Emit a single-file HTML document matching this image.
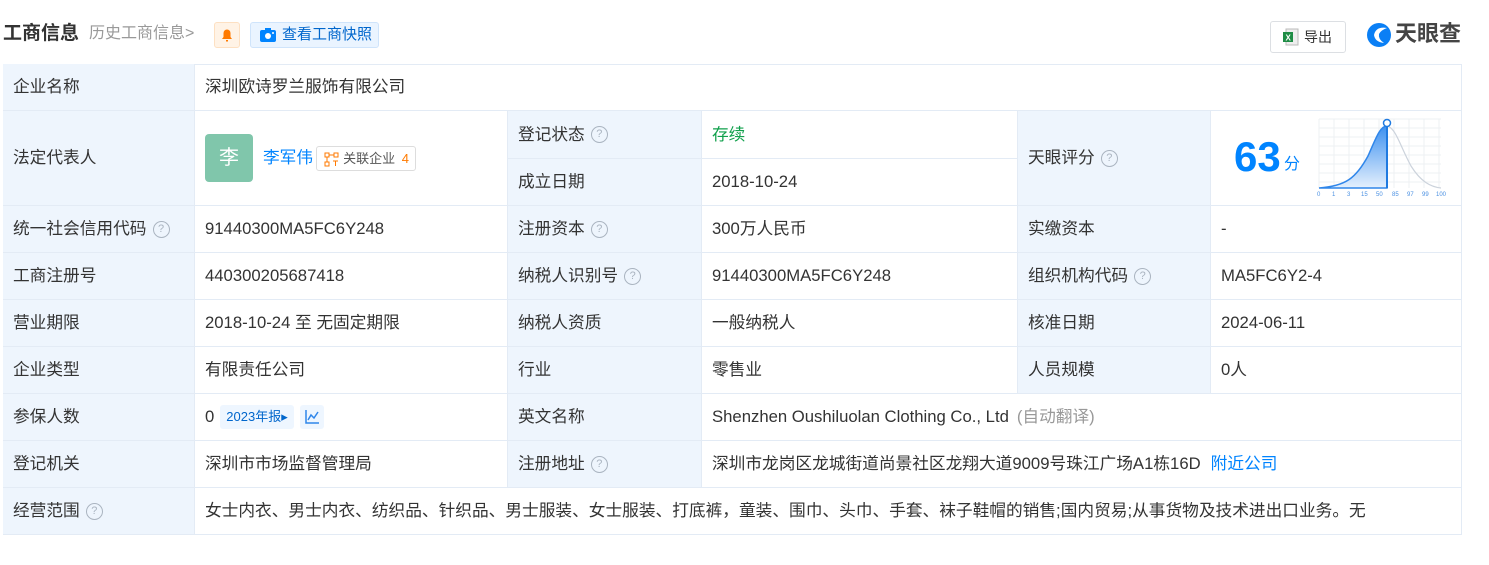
<!DOCTYPE html>
<html><head><meta charset="utf-8"><style>
*{margin:0;padding:0;box-sizing:border-box}
body{width:1489px;height:565px;background:#fff;font-family:"Liberation Sans","Noto Sans CJK SC",sans-serif;color:#333;position:relative;overflow:hidden;font-size:16px}
.a{position:absolute}
.c{position:absolute;border-right:1px solid #e3ebf5;border-bottom:1px solid #e3ebf5;display:flex;align-items:center;padding-left:10px;white-space:nowrap;font-size:16.7px;line-height:22px}
.c>span{line-height:22px}
.l{background:#eef5fd}
.q{display:inline-block;width:17px;height:17px;border:1px solid #aab4c0;border-radius:50%;font-size:11px;color:#aab4c0;text-align:center;line-height:15px !important;margin-left:6px}
</style></head><body>
<div class="a" style="left:3px;top:22px;font-size:19px;line-height:24px;font-weight:bold;color:#333">工商信息</div>
<div class="a" style="left:89px;top:24px;font-size:16px;line-height:20px;color:#999">历史工商信息&gt;</div>
<div class="a" style="left:214px;top:22px;width:26px;height:26px;background:#fff3e6;border:1px solid #fde0c2;border-radius:3px">
<svg width="24" height="24" viewBox="0 0 24 24"><path d="M7 16h10l-1.5-2v-4a3.5 3.5 0 0 0-7 0v4z M11 17h2v1.5h-2z" fill="#ff7a00"/></svg></div>
<div class="a" style="left:250px;top:22px;width:129px;height:26px;background:#eaf4ff;border:1px solid #cfe4fb;border-radius:3px;font-size:15px;color:#0066cc;line-height:24px;padding-left:31px">查看工商快照</div>
<svg class="a" style="left:259px;top:27px" width="18" height="16" viewBox="0 0 18 16"><rect x="1" y="3" width="16" height="12" rx="2" fill="#0084ff"/><rect x="6" y="1" width="6" height="3" fill="#0084ff"/><circle cx="9" cy="9" r="3" fill="#fff"/><circle cx="14" cy="6" r="1" fill="#fff"/></svg>
<div class="a" style="left:1270px;top:21px;width:76px;height:32px;border:1px solid #dcdfe3;border-radius:3px;font-size:14px;line-height:30px;padding-left:33px;color:#333">导出</div>
<svg class="a" style="left:1283px;top:28px" width="16" height="18" viewBox="0 0 16 18"><rect x="3" y="1" width="12" height="16" fill="#eee" stroke="#bbb"/><rect x="0" y="4" width="10" height="10" fill="#1e8c45"/><text x="2.5" y="12.5" font-size="8" fill="#fff" font-family="Liberation Sans" font-weight="bold">X</text></svg>
<svg class="a" style="left:1366px;top:22px" width="28" height="26" viewBox="0 0 28 26"><circle cx="13" cy="13" r="12" fill="#0a7ff5"/><path d="M21 6 Q10 4 8 13 Q9 20 18 21 Q12 17 13 12 Q15 8 21 6z" fill="#fff"/></svg>
<div class="a" style="left:1395px;top:22px;font-size:22px;line-height:24px;font-weight:bold;color:#444">天眼查</div>

<div class="a" style="left:3px;top:64px;width:1459px;height:471px;border-top:1px solid #e3ebf5;border-left:1px solid #e3ebf5"></div>
<div class="c l" style="left:3px;top:64px;width:192px;height:47px">企业名称</div>
<div class="c" style="left:195px;top:64px;width:1267px;height:47px">深圳欧诗罗兰服饰有限公司</div>

<div class="c l" style="left:3px;top:111px;width:192px;height:95px">法定代表人</div>
<div class="c" style="left:195px;top:111px;width:313px;height:95px">
<div style="width:48px;height:48px;background:#80c6ab;border-radius:4px;color:#fff;font-size:20px;text-align:center;line-height:48px;margin-right:10px">李</div>
<span style="color:#0084ff">李军伟</span>
<span style="margin-left:3px;border:1px solid #ddd;border-radius:3px;font-size:13px;height:25px;line-height:23px !important;padding:0 6px 0 26px;position:relative;color:#555">关联企业 <span style="color:#ff7a00;margin-left:3px">4</span>
<svg style="position:absolute;left:7px;top:5px" width="15" height="15" viewBox="0 0 15 15"><rect x="1" y="1" width="4" height="4" fill="none" stroke="#ff7a00"/><rect x="10" y="1" width="4" height="4" fill="none" stroke="#ff7a00"/><rect x="1" y="10" width="4" height="4" fill="none" stroke="#ff7a00"/><path d="M3 5v5M5 3h5M9 9h5M11.5 9v5" stroke="#ff7a00" fill="none"/></svg></span>
</div>
<div class="c l" style="left:508px;top:111px;width:194px;height:48px">登记状态<span class="q">?</span></div>
<div class="c" style="left:702px;top:111px;width:316px;height:48px;color:#11a04c">存续</div>
<div class="c l" style="left:508px;top:159px;width:194px;height:47px">成立日期</div>
<div class="c" style="left:702px;top:159px;width:316px;height:47px">2018-10-24</div>
<div class="c l" style="left:1018px;top:111px;width:193px;height:95px">天眼评分<span class="q">?</span></div>
<div class="c" style="left:1211px;top:111px;width:251px;height:95px"></div>
<div class="a" style="left:1234px;top:134px;font-size:42px;line-height:46px;font-weight:bold;color:#0084ff">63</div>
<div class="a" style="left:1284px;top:155px;font-size:16px;line-height:20px;color:#0084ff">分</div>
<svg class="a" style="left:1316px;top:116px" width="140" height="86" viewBox="0 0 140 86">
<g stroke="#eef0f3" stroke-width="1"><path d="M3 3v69M18 3v69M33 3v69M48 3v69M63 3v69M78 3v69M93 3v69M108 3v69M123 3v69M3 3h122M3 12h122M3 21h122M3 30h122M3 39h122M3 48h122M3 57h122M3 66h122"/></g>
<defs><linearGradient id="g" x1="0" y1="0" x2="0" y2="1"><stop offset="0" stop-color="#3d91f0"/><stop offset="1" stop-color="#e5f0fd"/></linearGradient></defs>
<path d="M3 72 C30 70 40 62 52 40 C60 22 64 10 71 10 L71 72z" fill="url(#g)" stroke="#2f86ea" stroke-width="1.5"/>
<path d="M71 10 C80 12 84 30 95 50 C105 66 115 71 125 72" fill="none" stroke="#ccd3dc" stroke-width="1.2"/>
<path d="M71 8v64" stroke="#1f7ae0" stroke-width="2"/>
<circle cx="71" cy="7" r="3.5" fill="#fff" stroke="#1f7ae0" stroke-width="1.5"/>
<g font-size="6" fill="#4a90e2" font-family="Liberation Sans"><text x="1" y="80">0</text><text x="16" y="80">1</text><text x="31" y="80">3</text><text x="45" y="80">15</text><text x="60" y="80">50</text><text x="76" y="80">85</text><text x="91" y="80">97</text><text x="106" y="80">99</text><text x="120" y="80">100</text></g>
</svg>

<div class="c l" style="left:3px;top:206px;width:192px;height:47px">统一社会信用代码<span class="q">?</span></div>
<div class="c" style="left:195px;top:206px;width:313px;height:47px">91440300MA5FC6Y248</div>
<div class="c l" style="left:508px;top:206px;width:194px;height:47px">注册资本<span class="q">?</span></div>
<div class="c" style="left:702px;top:206px;width:316px;height:47px">300万人民币</div>
<div class="c l" style="left:1018px;top:206px;width:193px;height:47px">实缴资本</div>
<div class="c" style="left:1211px;top:206px;width:251px;height:47px">-</div>

<div class="c l" style="left:3px;top:253px;width:192px;height:47px">工商注册号</div>
<div class="c" style="left:195px;top:253px;width:313px;height:47px">440300205687418</div>
<div class="c l" style="left:508px;top:253px;width:194px;height:47px">纳税人识别号<span class="q">?</span></div>
<div class="c" style="left:702px;top:253px;width:316px;height:47px">91440300MA5FC6Y248</div>
<div class="c l" style="left:1018px;top:253px;width:193px;height:47px">组织机构代码<span class="q">?</span></div>
<div class="c" style="left:1211px;top:253px;width:251px;height:47px">MA5FC6Y2-4</div>

<div class="c l" style="left:3px;top:300px;width:192px;height:47px">营业期限</div>
<div class="c" style="left:195px;top:300px;width:313px;height:47px">2018-10-24 至 无固定期限</div>
<div class="c l" style="left:508px;top:300px;width:194px;height:47px">纳税人资质</div>
<div class="c" style="left:702px;top:300px;width:316px;height:47px">一般纳税人</div>
<div class="c l" style="left:1018px;top:300px;width:193px;height:47px">核准日期</div>
<div class="c" style="left:1211px;top:300px;width:251px;height:47px">2024-06-11</div>

<div class="c l" style="left:3px;top:347px;width:192px;height:47px">企业类型</div>
<div class="c" style="left:195px;top:347px;width:313px;height:47px">有限责任公司</div>
<div class="c l" style="left:508px;top:347px;width:194px;height:47px">行业</div>
<div class="c" style="left:702px;top:347px;width:316px;height:47px">零售业</div>
<div class="c l" style="left:1018px;top:347px;width:193px;height:47px">人员规模</div>
<div class="c" style="left:1211px;top:347px;width:251px;height:47px">0人</div>

<div class="c l" style="left:3px;top:394px;width:192px;height:47px">参保人数</div>
<div class="c" style="left:195px;top:394px;width:313px;height:47px"><span>0</span>
<span style="margin-left:6px;background:#eef6ff;border-radius:3px;font-size:13px;color:#0066cc;height:24px;line-height:24px !important;padding:0 6px">2023年报▸</span>
<span style="margin-left:6px;background:#eef6ff;border-radius:3px;width:24px;height:24px;display:inline-block;position:relative"><svg style="position:absolute;left:4px;top:4px" width="16" height="16" viewBox="0 0 16 16"><path d="M2 1v13h13M4 11l3-5 3 3 4-6" fill="none" stroke="#2f86ea" stroke-width="1.5"/></svg></span></div>
<div class="c l" style="left:508px;top:394px;width:194px;height:47px">英文名称</div>
<div class="c" style="left:702px;top:394px;width:760px;height:47px"><span>Shenzhen Oushiluolan Clothing Co., Ltd</span><span style="color:#999;margin-left:8px">(自动翻译)</span></div>

<div class="c l" style="left:3px;top:441px;width:192px;height:47px">登记机关</div>
<div class="c" style="left:195px;top:441px;width:313px;height:47px">深圳市市场监督管理局</div>
<div class="c l" style="left:508px;top:441px;width:194px;height:47px">注册地址<span class="q">?</span></div>
<div class="c" style="left:702px;top:441px;width:760px;height:47px"><span>深圳市龙岗区龙城街道尚景社区龙翔大道9009号珠江广场A1栋16D</span><span style="color:#0084ff;margin-left:10px">附近公司</span></div>

<div class="c l" style="left:3px;top:488px;width:192px;height:47px">经营范围<span class="q">?</span></div>
<div class="c" style="left:195px;top:488px;width:1267px;height:47px">女士内衣、男士内衣、纺织品、针织品、男士服装、女士服装、打底裤，童装、围巾、头巾、手套、袜子鞋帽的销售;国内贸易;从事货物及技术进出口业务。无</div>
</body></html>
